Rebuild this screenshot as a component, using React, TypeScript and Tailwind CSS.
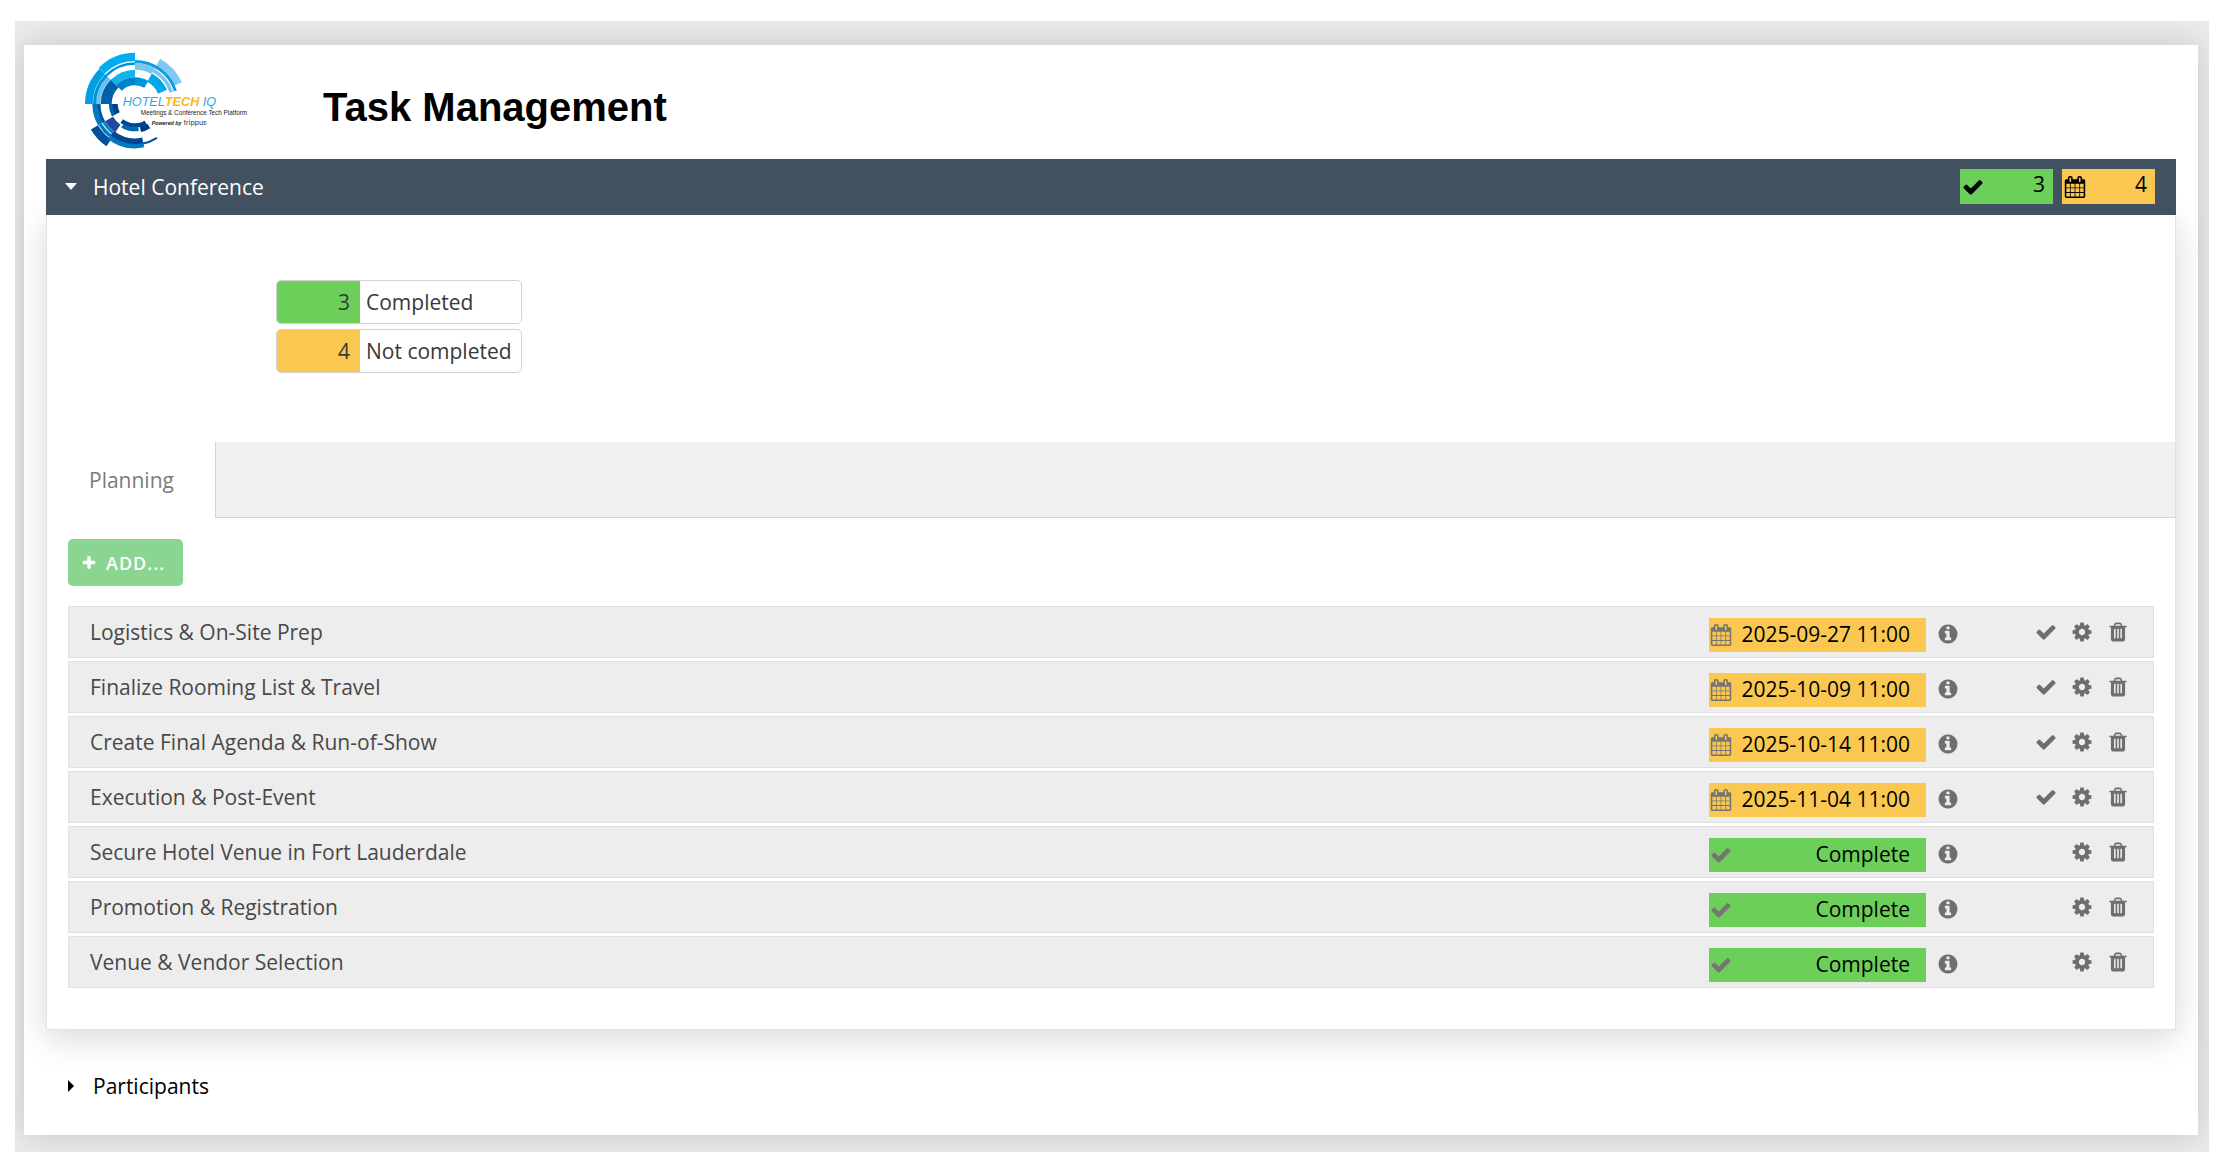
import React from "react";

const GLYPHS = {
  check:
    "M1671 566q0 40-28 68l-724 724-136 136q-28 28-68 28t-68-28l-136-136-362-362q-28-28-28-68t28-68l136-136q28-28 68-28t68 28l294 295 656-657q28-28 68-28t68 28l136 136q28 28 28 68z",
  calendar:
    "M192 1664h288v-288h-288v288zm352 0h320v-288h-320v288zm-352-352h288v-320h-288v320zm352 0h320v-320h-320v320zm-352-384h288v-288h-288v288zm736 736h320v-288h-320v288zm-384-736h320v-288h-320v288zm768 736h288v-288h-288v288zm-384-352h320v-320h-320v320zm-352-864v-288q0-13-9.500-22.500t-22.500-9.500h-64q-13 0-22.500 9.500t-9.500 22.500v288q0 13 9.500 22.500t22.500 9.500h64q13 0 22.500-9.500t9.500-22.500zm736 864h288v-320h-288v320zm-384-384h320v-288h-320v288zm384 0h288v-288h-288v288zm32-480v-288q0-13-9.500-22.500t-22.500-9.500h-64q-13 0-22.500 9.500t-9.500 22.500v288q0 13 9.500 22.500t22.500 9.500h64q13 0 22.500-9.500t9.500-22.500zm384-64v1280q0 52-38 90t-90 38h-1408q-52 0-90-38t-38-90v-1280q0-52 38-90t90-38h128v-96q0-66 47-113t113-47h64q66 0 113 47t47 113v96h384v-96q0-66 47-113t113-47h64q66 0 113 47t47 113v96h128q52 0 90 38t38 90z",
  info:
    "M1152 1376v-160q0-14-9-23t-23-9h-96v-512q0-14-9-23t-23-9h-320q-14 0-23 9t-9 23v160q0 14 9 23t23 9h96v320h-96q-14 0-23 9t-9 23v160q0 14 9 23t23 9h448q14 0 23-9t9-23zm-128-896v-160q0-14-9-23t-23-9h-192q-14 0-23 9t-9 23v160q0 14 9 23t23 9h192q14 0 23-9t9-23zm640 416q0 209-103 385.500t-279.500 279.500-385.500 103-385.500-103-279.500-279.500-103-385.500 103-385.500 279.500-279.500 385.500-103 385.500 103 279.500 279.500 103 385.500z",
  cog:
    "M1152 896q0-106-75-181t-181-75-181 75-75 181 75 181 181 75 181-75 75-181zm512-109v222q0 12-8 23t-20 13l-185 28q-19 54-39 91 35 50 107 138 10 12 10 25t-9 23q-27 37-99 108t-94 71q-12 0-26-9l-138-108q-44 23-91 38-16 136-29 186-7 28-36 28h-222q-14 0-24.500-8.500t-11.500-21.500l-28-184q-49-16-90-37l-141 107q-10 9-25 9-14 0-25-11-126-114-165-168-7-10-7-23 0-12 8-23 15-21 51-66.500t54-70.500q-27-50-41-99l-183-27q-13-2-21-12.500t-8-23.500v-222q0-12 8-23t19-13l186-28q14-46 39-92-40-57-107-138-10-12-10-24 0-10 9-23 26-36 98.500-107.500t94.500-71.500q13 0 26 10l138 107q44-23 91-38 16-136 29-186 7-28 36-28h222q14 0 24.500 8.500t11.500 21.500l28 184q49 16 90 37l142-107q9-9 24-9 13 0 25 10 129 119 165 170 7 8 7 22 0 12-8 23-15 21-51 66.500t-54 70.500q26 50 41 98l183 28q13 2 21 12.500t8 23.500z",
  trash:
    "M704 1376v-704q0-14-9-23t-23-9h-64q-14 0-23 9t-9 23v704q0 14 9 23t23 9h64q14 0 23-9t9-23zm256 0v-704q0-14-9-23t-23-9h-64q-14 0-23 9t-9 23v704q0 14 9 23t23 9h64q14 0 23-9t9-23zm256 0v-704q0-14-9-23t-23-9h-64q-14 0-23 9t-9 23v704q0 14 9 23t23 9h64q14 0 23-9t9-23zm-544-992h448l-48-117q-7-9-17-11h-317q-10 2-17 11zm928 32v64q0 14-9 23t-23 9h-96v948q0 83-47 143.500t-113 60.500h-832q-66 0-113-58.500t-47-141.500v-952h-96q-14 0-23-9t-9-23v-64q0-14 9-23t23-9h309l70-167q15-37 54-63t79-26h320q40 0 79 26t54 63l70 167h309q14 0 23 9t9 23z",
  plus:
    "M1600 736v192q0 40-28 68t-68 28h-416v416q0 40-28 68t-68 28h-192q-40 0-68-28t-28-68v-416h-416q-40 0-68-28t-28-68v-192q0-40 28-68t68-28h416v-416q0-40 28-68t68-28h192q40 0 68 28t28 68v416h416q40 0 68 28t28 68z",
};

function Glyph({ name, className }: { name: keyof typeof GLYPHS; className: string }) {
  return (
    <svg viewBox="0 0 1792 1792" fill="currentColor" aria-hidden="true" className={className}>
      <path d={GLYPHS[name]} />
    </svg>
  );
}

// Ring sector around the logo centre: inner radius, outer radius, start and end angle, colour.
type Sector = [number, number, number, number, string];

const SECTORS: Sector[] = [
  [129, 154, 225, 270, "#00aeef"],
  [127, 150, 180, 225, "#009fe3"],
  [128, 155, 299, 335, "#7fc9f3"],
  [118, 125, 225, 270, "#0093dc"],
  [123, 132, 270, 342, "#0a9de2"],
  [103, 123, 270, 299, "#7ac6f1"],
  [109, 120, 299, 342, "#7ac6f1"],
  [104, 118, 180, 225, "#6cc0ef"],
  [117, 126, 180, 225, "#0093dc"],
  [80, 103, 225, 270, "#14b4ea"],
  [56, 80, 225, 270, "#0082cb"],
  [56, 80, 270, 300, "#0093dc"],
  [76, 105, 299, 336, "#00a8e8"],
  [70, 103, 180, 225, "#0060a9"],
  [104, 128, 150, 180, "#0079c1"],
  [104, 112, 150, 180, "#00569f"],
  [52, 78, 152, 180, "#004289"],
  [68, 78, 152, 180, "#0065ad"],
  [128, 153, 124, 150, "#00509a"],
  [116, 126, 128, 150, "#0079c1"],
  [104, 113, 128, 150, "#0089cf"],
  [76, 104, 125, 150, "#2148a0"],
  [103, 121, 78, 128, "#00478f"],
  [120, 133, 78, 128, "#0079c1"],
  [118, 124, 57, 80, "#00529b"],
  [58, 71, 60, 128, "#00478f"],
  [70, 82, 82, 120, "#0068b0"],
  [70, 86, 58, 78, "#003a7d"],
];

function sectorPath([inner, outer, from, to]: Sector) {
  const at = (r: number, deg: number) => {
    const a = (deg * Math.PI) / 180;
    return `${(r * Math.cos(a)).toFixed(1)} ${(r * Math.sin(a)).toFixed(1)}`;
  };
  return `M${at(outer, from)}A${outer} ${outer} 0 0 1 ${at(outer, to)}L${at(inner, to)}A${inner} ${inner} 0 0 0 ${at(inner, from)}Z`;
}

function Logo() {
  return (
    <svg
      viewBox="0 0 498 300"
      role="img"
      aria-label="HotelTech IQ"
      className="mb-1 h-[100px] w-[166px] shrink-0 font-['Liberation_Sans',Arial,sans-serif]"
    >
      <g transform="translate(156 162)">
        {SECTORS.map((s, i) => (
          <path key={i} d={sectorPath(s)} fill={s[4]} />
        ))}
      </g>
      <text x="119" y="168" fontSize="38" fontStyle="italic" fill="#29a8e6">
        HOTEL
        <tspan fontWeight="700" fill="#fdb913">
          TECH
        </tspan>{" "}
        IQ
      </text>
      <text x="173" y="195" fontSize="19" fill="#222">
        Meetings &amp; Conference Tech Platform
      </text>
      <text x="206" y="226" fontSize="16" fontStyle="italic" fontWeight="700" fill="#222">
        Powered by
      </text>
      <text x="302" y="226" fontSize="21" fill="#23284e" fontFamily="Inter, sans-serif">
        trippus
      </text>
    </svg>
  );
}

const TASKS = [
  { name: "Logistics & On-Site Prep", due: "2025-09-27 11:00" },
  { name: "Finalize Rooming List & Travel", due: "2025-10-09 11:00" },
  { name: "Create Final Agenda & Run-of-Show", due: "2025-10-14 11:00" },
  { name: "Execution & Post-Event", due: "2025-11-04 11:00" },
  { name: "Secure Hotel Venue in Fort Lauderdale", due: null },
  { name: "Promotion & Registration", due: null },
  { name: "Venue & Vendor Selection", due: null },
];

function TaskRow({ name, due }: { name: string; due: string | null }) {
  return (
    <li className="flex min-h-[52px] items-center border border-[#e0e0e0] bg-[#ededed] pr-[24px] pl-[21px]">
      <span className="flex-1 text-[#484848]">{name}</span>
      <span
        className={`mt-[6px] flex h-[34px] w-[217px] items-center justify-between pr-4 pl-px text-black ${
          due ? "bg-[#fac850]" : "bg-[#6ccf59]"
        }`}
      >
        <Glyph name={due ? "calendar" : "check"} className="size-[22px] text-[#757575]" />
        <span className="pb-[2px]">{due ?? "Complete"}</span>
      </span>
      <button type="button" aria-label={`About ${name}`} className="mt-1 ml-[11px] text-[#6e6e6e]">
        <Glyph name="info" className="block size-[22px]" />
      </button>
      <span className="ml-[76px] flex w-[94px] items-center justify-end gap-[14px] text-[#6e6e6e]">
        {due && (
          <button type="button" aria-label={`Mark ${name} complete`}>
            <Glyph name="check" className="block size-[22px]" />
          </button>
        )}
        <button type="button" aria-label={`Settings for ${name}`}>
          <Glyph name="cog" className="block size-[22px]" />
        </button>
        <button type="button" aria-label={`Delete ${name}`}>
          <Glyph name="trash" className="block size-[22px]" />
        </button>
      </span>
    </li>
  );
}

function CountBadge({ icon, count, className }: { icon: "check" | "calendar"; count: number; className: string }) {
  return (
    <span className={`flex h-[35px] w-[93px] items-center justify-between pr-2 pl-[2px] text-black ${className}`}>
      <Glyph name={icon} className="size-[22px]" />
      <span className="pb-[6px]">{count}</span>
    </span>
  );
}

function SummaryLine({ count, label, className }: { count: number; label: string; className: string }) {
  return (
    <div className="flex h-11 w-[246px] items-stretch overflow-hidden rounded-[5px] border border-[#d2d2d2] bg-white text-[#383838]">
      <dd className={`flex w-[83px] items-center justify-end pr-[10px] ${className}`}>{count}</dd>
      <dt className="flex items-center pl-[6px]">{label}</dt>
    </div>
  );
}

export default function App() {
  return (
    <div className="bg-white pt-[21px] pr-[10px] pb-[9px] pl-[15px] font-['Open_Sans',sans-serif] text-[21px] leading-[30px]">
      <div className="overflow-hidden bg-[#ebebeb] pt-6 pr-[11px] pb-[17px] pl-[9px]">
        <main className="bg-white px-[22px] pb-[34px] shadow-[0_0_32px_rgba(0,0,0,0.16)]">
          <header className="flex h-[114px] items-center pl-[37px]">
            <Logo />
            <h1 className="ml-[74px] pt-[10px] font-['Liberation_Sans',Arial,sans-serif] text-[40px] leading-[48px] font-bold text-black">
              Task Management
            </h1>
          </header>

          <section>
            <div className="relative z-10 flex items-center justify-between bg-[#42515f] pt-[10px] pr-[21px] pb-[11px] pl-[19px]">
              <button type="button" aria-expanded="true" className="flex items-center text-white">
                <svg viewBox="0 0 12 7" fill="currentColor" aria-hidden="true" className="h-[7px] w-3">
                  <path d="M0 0h12l-6 7z" />
                </svg>
                <span className="ml-4">Hotel Conference</span>
              </button>
              <div className="flex gap-[9px]">
                <CountBadge icon="check" count={3} className="bg-[#6ccf59]" />
                <CountBadge icon="calendar" count={4} className="bg-[#fac850]" />
              </div>
            </div>

            <div className="border-x border-b border-[#e2e2e2] bg-white pb-[41px] shadow-[0_8px_32px_rgba(0,0,0,0.16)]">
              <dl className="flex flex-col gap-[5px] pt-[65px] pb-[69px] pl-[229px]">
                <SummaryLine count={3} label="Completed" className="bg-[#6ccf59]" />
                <SummaryLine count={4} label="Not completed" className="bg-[#fac850]" />
              </dl>

              <div role="tablist" className="flex h-[76px]">
                <button
                  type="button"
                  role="tab"
                  aria-selected="true"
                  className="w-[169px] shrink-0 border-r border-[#d4d4d4] pl-[42px] text-left text-[#7b7b7b]"
                >
                  Planning
                </button>
                <div className="flex-1 border-b border-[#d4d4d4] bg-[#f0f0f0]" />
              </div>

              <div className="px-[21px] pt-[21px]">
                <button
                  type="button"
                  className="flex h-[47px] items-center rounded-[5px] bg-[#8bd593] pr-[18px] pl-[13px] text-[18px] leading-6 font-semibold tracking-[1px] text-white"
                >
                  <Glyph name="plus" className="mr-[9px] size-4" />
                  ADD...
                </button>
                <ul className="mt-5 flex flex-col gap-[3px]">
                  {TASKS.map((task) => (
                    <TaskRow key={task.name} {...task} />
                  ))}
                </ul>
              </div>
            </div>
          </section>

          <button type="button" aria-expanded="false" className="mt-[41px] flex items-center pl-[22px] text-black">
            <svg viewBox="0 0 6 12" fill="currentColor" aria-hidden="true" className="h-3 w-[6px]">
              <path d="M0 0v12l6-6z" />
            </svg>
            <span className="ml-[19px]">Participants</span>
          </button>
        </main>
      </div>
    </div>
  );
}
